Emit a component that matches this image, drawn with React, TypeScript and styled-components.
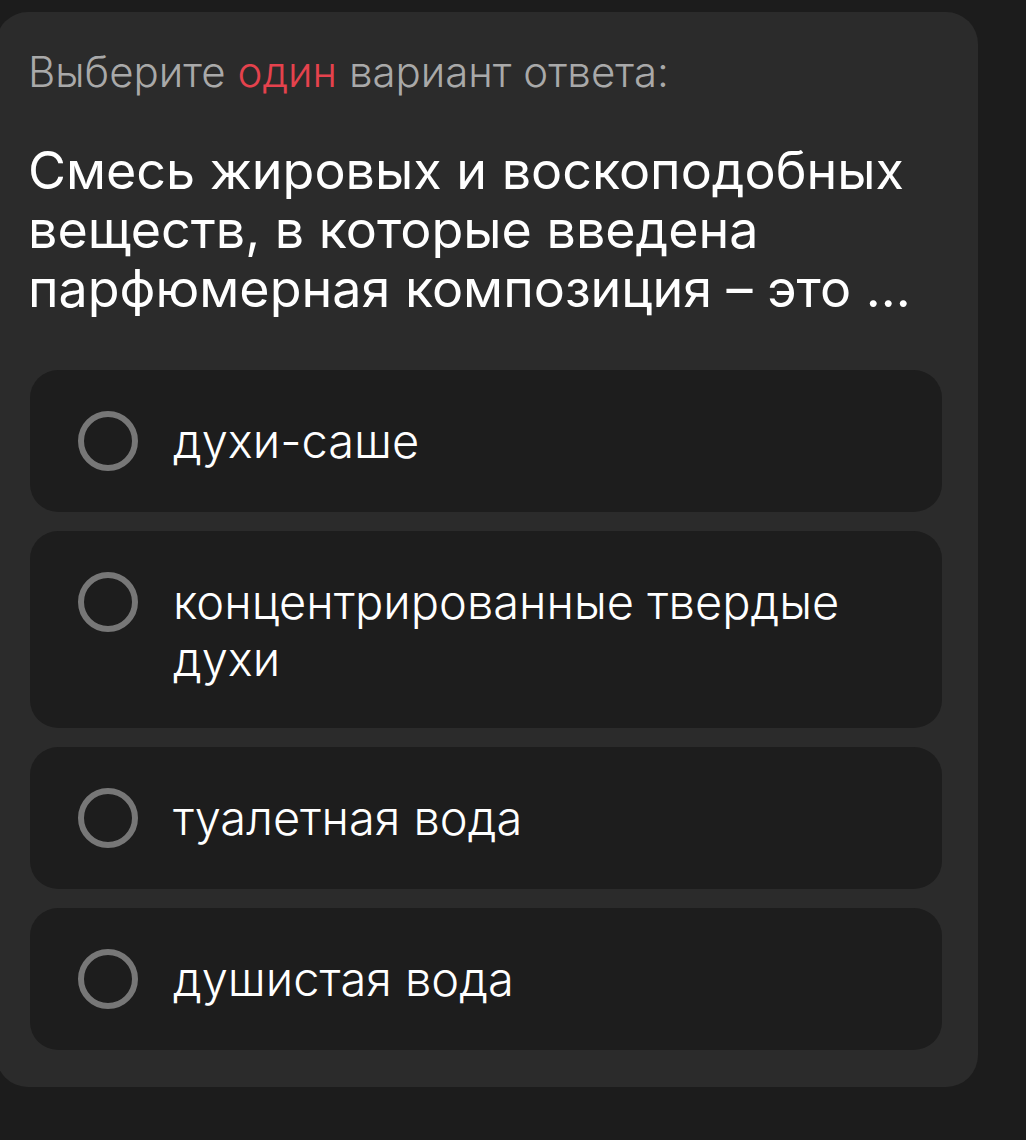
import React from "react";
import styled, { createGlobalStyle } from "styled-components";

const GlobalStyle = createGlobalStyle`
  html, body {
    margin: 0;
    padding: 0;
    background: #1c1c1c;
  }
  body {
    font-family: "Inter", "Noto Sans", sans-serif;
    overflow: hidden;
  }
`;

const Page = styled.div`
  width: 1026px;
  height: 1140px;
  padding-top: 12px;
  box-sizing: border-box;
`;

const Card = styled.div`
  width: 982px;
  margin-left: -4px;
  box-sizing: border-box;
  padding: 36px 36px 37px 34px;
  background: #2b2b2b;
  border-radius: 32px;
`;

const Prompt = styled.div`
  font-size: 42px;
  line-height: 48px;
  color: #a9a9a9;
  font-weight: 300;
  margin-left: -2px;

  span {
    color: #e5424d;
  }
`;

const Question = styled.h2`
  margin: 45px 0 52px -2px;
  font-size: 52px;
  line-height: 59px;
  font-weight: 400;
  color: #ffffff;
`;

const Options = styled.div`
  display: flex;
  flex-direction: column;
  gap: 19px;
`;

const Option = styled.label`
  display: flex;
  align-items: flex-start;
  gap: 35px;
  padding: 41px 40px 41px 48px;
  background: #1d1d1d;
  border-radius: 28px;
  cursor: pointer;
`;

const Radio = styled.span`
  flex: none;
  width: 60px;
  height: 60px;
  box-sizing: border-box;
  border: 6px solid #777777;
  border-radius: 50%;
`;

const OptionText = styled.span`
  font-size: 47px;
  line-height: 57px;
  color: #ffffff;
  font-weight: 300;
  margin-top: 1px;
`;

const answers = [
  "духи-саше",
  "концентрированные твердые духи",
  "туалетная вода",
  "душистая вода",
];

export default function App() {
  return (
    <Page>
      <GlobalStyle />
      <Card>
        <Prompt>
          Выберите <span>один</span> вариант ответа:
        </Prompt>
        <Question>
          Смесь жировых и воскоподобных веществ, в которые введена
          парфюмерная композиция – это ...
        </Question>
        <Options>
          {answers.map((a) => (
            <Option key={a}>
              <Radio />
              <OptionText>{a}</OptionText>
            </Option>
          ))}
        </Options>
      </Card>
    </Page>
  );
}
